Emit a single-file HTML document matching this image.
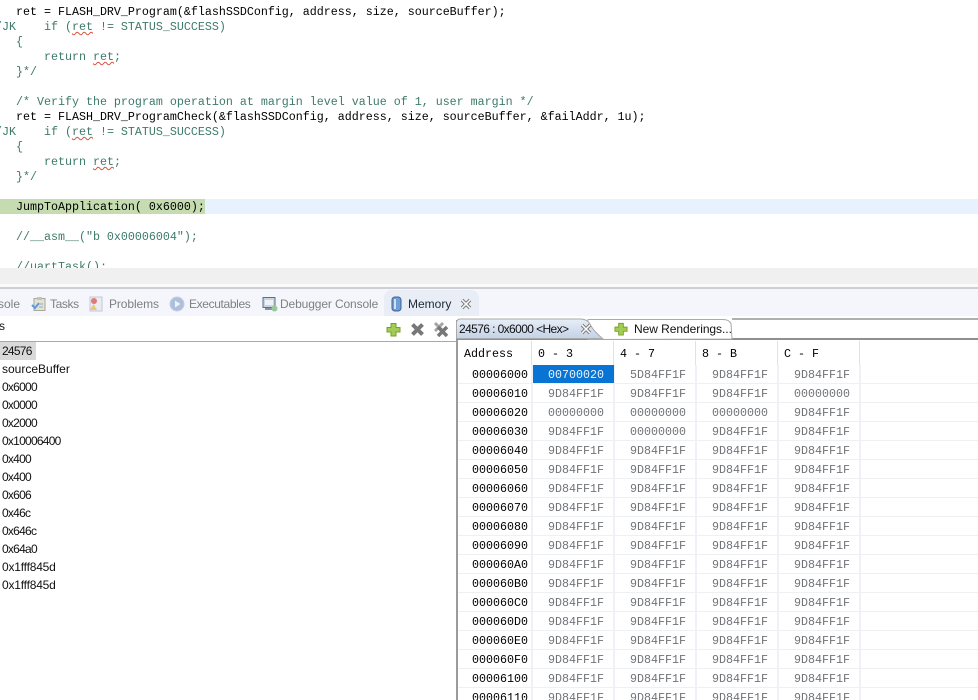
<!DOCTYPE html>
<html>
<head>
<meta charset="utf-8">
<style>
html,body{margin:0;padding:0;background:#fff;width:978px;height:700px;overflow:hidden;}
#root{position:relative;width:978px;height:700px;overflow:hidden;background:#fff;}
.a{position:absolute;}
#ed{left:0;top:0;width:978px;height:268px;overflow:hidden;background:#fff;}
.c{position:absolute;left:16px;white-space:pre;font:11.67px/15px "Liberation Mono",monospace;color:#3d7a6a;}
.k{color:#000;}
.w{text-decoration:underline wavy #d8503c 1px;text-underline-offset:1px;}
.t{position:absolute;top:297px;font:12px/14px "Liberation Sans",sans-serif;color:#7d8084;white-space:nowrap;}
.l{position:absolute;left:2px;font:12px/18px "Liberation Sans",sans-serif;color:#111;white-space:nowrap;}
.n{letter-spacing:-.75px;}
.r{position:absolute;left:458px;width:520px;height:19px;font:11.67px/21px "Liberation Mono",monospace;white-space:pre;border-bottom:1px solid #eff0f2;box-sizing:border-box;}
.r span{position:absolute;top:0;}
.r .ad{left:14px;color:#000;}
.r .d1{left:90px;color:#707377;}
.r .d2{left:172px;color:#707377;}
.r .d3{left:254px;color:#707377;}
.r .d4{left:336px;color:#707377;}
.v{position:absolute;top:365px;width:2px;height:335px;background:#eff1f7;}
.h{position:absolute;top:341px;width:1px;height:24px;background:#e2e2e2;}
.hd{position:absolute;top:347px;font:11.67px/15px "Liberation Mono",monospace;color:#000;white-space:pre;}
</style>
</head>
<body>
<div id="root">
<div class="a" id="ed">
<div class="c k" style="top:5px">ret = FLASH_DRV_Program(&amp;flashSSDConfig, address, size, sourceBuffer);</div>
<div class="c" style="top:20px;left:-5px">/JK    if (<span class="w">ret</span> != STATUS_SUCCESS)</div>
<div class="c" style="top:35px">{</div>
<div class="c" style="top:50px">    return <span class="w">ret</span>;</div>
<div class="c" style="top:65px">}*/</div>
<div class="c" style="top:95px">/* Verify the program operation at margin level value of 1, user margin */</div>
<div class="c k" style="top:110px">ret = FLASH_DRV_ProgramCheck(&amp;flashSSDConfig, address, size, sourceBuffer, &amp;failAddr, 1u);</div>
<div class="c" style="top:125px;left:-5px">/JK    if (<span class="w">ret</span> != STATUS_SUCCESS)</div>
<div class="c" style="top:140px">{</div>
<div class="c" style="top:155px">    return <span class="w">ret</span>;</div>
<div class="c" style="top:170px">}*/</div>
<div class="a" style="left:0;top:199px;width:978px;height:15px;background:#e8f2fe"></div>
<div class="a" style="left:0;top:199px;width:205px;height:15px;background:#c5dbb0"></div>
<div class="c k" style="top:200px">JumpToApplication( 0x6000);</div>
<div class="c" style="top:230px">//__asm__("b 0x00006004");</div>
<div class="c" style="top:260px">//uartTask();</div>
</div>

<div class="a" style="left:0;top:268px;width:978px;height:16px;background:#f0f0f0"></div>
<div class="a" style="left:0;top:284px;width:978px;height:3px;background:#fafafa"></div>
<div class="a" style="left:0;top:287px;width:978px;height:2px;background:#cdced6"></div>
<div class="a" style="left:0;top:289px;width:978px;height:27px;background:#f5f6fb"></div>
<div class="a" style="left:384px;top:290px;width:95px;height:26px;background:#e9edf5;border-radius:8px 8px 0 0"></div>

<div class="t" style="left:-2px">sole</div>
<svg class="a" style="left:31px;top:296px" width="16" height="16" viewBox="0 0 16 16"><rect x="3" y="2.500" width="11" height="12" fill="#e4e1d6" stroke="#a8a79c"/><rect x="6" y="1" width="5" height="3" fill="#c4c3b8"/><path d="M1 9l3 3 4-5" stroke="#5a9bdc" stroke-width="2" fill="none"/><path d="M8 8h4M8 11h4" stroke="#9ab" stroke-width="1"/></svg>
<div class="t" style="left:50px;letter-spacing:-.4px">Tasks</div>
<svg class="a" style="left:88px;top:296px" width="16" height="16" viewBox="0 0 16 16"><rect x="2" y="1" width="12" height="14" fill="#eceaf2" stroke="#c6c6d4"/><circle cx="6" cy="5" r="3" fill="#dd7a7a"/><path d="M5.500 8l3.500 6H2z" fill="#e8c877"/></svg>
<div class="t" style="left:109px;letter-spacing:-.1px">Problems</div>
<svg class="a" style="left:169px;top:296px" width="16" height="16" viewBox="0 0 16 16"><circle cx="8" cy="8" r="7" fill="#aebfdc" stroke="#c3cfe4"/><path d="M6 4.500l5.500 3.500L6 11.500z" fill="#eef2f8"/></svg>
<div class="t" style="left:189px;letter-spacing:-.36px">Executables</div>
<svg class="a" style="left:262px;top:296px" width="16" height="16" viewBox="0 0 16 16"><rect x="1" y="1.500" width="12" height="10" fill="#c8d4e2" stroke="#5c6f86"/><rect x="3" y="4" width="8" height="5" fill="#eef2f6"/><rect x="3" y="12" width="8" height="2" fill="#8894a4"/><circle cx="12.500" cy="12.500" r="3" fill="#9ac79a"/></svg>
<div class="t" style="left:280px;letter-spacing:-.12px">Debugger Console</div>
<svg class="a" style="left:391px;top:296px" width="11" height="16" viewBox="0 0 11 16"><rect x="1" y="1" width="9" height="14" rx="3" fill="#6f9fd8" stroke="#41628e"/><rect x="3" y="3" width="2" height="10" fill="#cfe0f4"/></svg>
<div class="t" style="left:408px;color:#1d2a3a">Memory</div>
<svg class="a" style="left:460px;top:298px" width="12" height="12" viewBox="0 0 12 12"><path d="M2 2l8 8M10 2l-8 8" stroke="#7b7b7b" stroke-width="3.500" fill="none"/><path d="M2 2l8 8M10 2l-8 8" stroke="#fff" stroke-width="1.500" fill="none"/></svg>

<div class="l" style="left:-1px;top:317px">s</div>

<svg class="a" style="left:386px;top:322px" width="15" height="15" viewBox="0 0 15 15"><path d="M5 1.500h5v4h4v4.500h-4v4h-5v-4h-4v-4.500h4z" fill="#a3cc52" stroke="#74a02f"/></svg>
<svg class="a" style="left:410px;top:322px" width="15" height="15" viewBox="0 0 15 15"><path d="M2.500 2.500l10 10M12.500 2.500l-10 10" stroke="#777" stroke-width="4" fill="none"/></svg>
<svg class="a" style="left:433px;top:321px" width="16" height="16" viewBox="0 0 16 16"><path d="M2 2l8 8M10 2l-8 8" stroke="#a5a5a5" stroke-width="3" fill="none"/><path d="M5 6l9 9M14 6l-9 9" stroke="#777" stroke-width="3.500" fill="none"/></svg>

<!-- left list -->
<div class="a" style="left:0;top:341px;width:456px;height:1px;background:#a8a8a8"></div>
<div class="a" style="left:0;top:342px;width:36px;height:18px;background:#d9d9d9"></div>
<div class="l n" style="top:342px">24576</div>
<div class="l" style="top:360px">sourceBuffer</div>
<div class="l n" style="top:378px">0x6000</div>
<div class="l n" style="top:396px">0x0000</div>
<div class="l n" style="top:414px">0x2000</div>
<div class="l n" style="top:432px">0x10006400</div>
<div class="l n" style="top:450px">0x400</div>
<div class="l n" style="top:468px">0x400</div>
<div class="l n" style="top:486px">0x606</div>
<div class="l n" style="top:504px">0x46c</div>
<div class="l n" style="top:522px">0x646c</div>
<div class="l n" style="top:540px">0x64a0</div>
<div class="l" style="top:558px;letter-spacing:-.2px">0x1fff845d</div>
<div class="l" style="top:576px;letter-spacing:-.2px">0x1fff845d</div>

<!-- right panel -->
<div class="a" style="left:456px;top:320px;width:2px;height:380px;background:#9b9b9b"></div>
<div class="a" style="left:732px;top:318px;width:246px;height:2px;background:#b0b0b0"></div>
<div class="a" style="left:456px;top:338px;width:522px;height:2px;background:#8f8f8f"></div>
<svg class="a" style="left:456px;top:317px" width="280" height="23" viewBox="0 0 280 23">
<defs><linearGradient id="g" x1="0" y1="0" x2="0" y2="1"><stop offset="0" stop-color="#e8eef7"/><stop offset="1" stop-color="#c2d2e7"/></linearGradient></defs>
<path d="M132 22.500V2.500h135q6 0 8 4l1 15.500z" fill="#fff" stroke="#a9a9a9"/>
<path d="M0.500 21.500V6q0-4 4-4h120q7 0 10 6t12 13.500z" fill="url(#g)" stroke="#a9a9a9"/>
</svg>
<div class="a" style="left:459px;top:322px;font:12px/14px 'Liberation Sans',sans-serif;color:#111;white-space:nowrap;letter-spacing:-.6px">24576 : 0x6000 &lt;Hex&gt;</div>
<svg class="a" style="left:580px;top:323px" width="12" height="12" viewBox="0 0 12 12"><path d="M2 2l8 8M10 2l-8 8" stroke="#7b7b7b" stroke-width="3.500" fill="none"/><path d="M2 2l8 8M10 2l-8 8" stroke="#fff" stroke-width="1.500" fill="none"/></svg>
<svg class="a" style="left:614px;top:322px" width="14" height="14" viewBox="0 0 15 15"><path d="M5 1.500h5v4h4v4.500h-4v4h-5v-4h-4v-4.500h4z" fill="#a3cc52" stroke="#74a02f"/></svg>
<div class="a" style="left:634px;top:322px;font:12px/14px 'Liberation Sans',sans-serif;color:#111;white-space:nowrap;letter-spacing:-.05px">New Renderings...</div>

<div class="hd" style="left:464px">Address</div>
<div class="hd" style="left:538px">0 - 3</div>
<div class="hd" style="left:620px">4 - 7</div>
<div class="hd" style="left:702px">8 - B</div>
<div class="hd" style="left:784px">C - F</div>
<div class="h" style="left:531px"></div>
<div class="h" style="left:613px"></div>
<div class="h" style="left:695px"></div>
<div class="h" style="left:777px"></div>
<div class="h" style="left:859px"></div>

<div class="r" style="top:365px"><span class="ad">00006000</span><span class="d2">5D84FF1F</span><span class="d3">9D84FF1F</span><span class="d4">9D84FF1F</span></div>
<div class="r" style="top:384px"><span class="ad">00006010</span><span class="d1">9D84FF1F</span><span class="d2">9D84FF1F</span><span class="d3">9D84FF1F</span><span class="d4">00000000</span></div>
<div class="r" style="top:403px"><span class="ad">00006020</span><span class="d1">00000000</span><span class="d2">00000000</span><span class="d3">00000000</span><span class="d4">9D84FF1F</span></div>
<div class="r" style="top:422px"><span class="ad">00006030</span><span class="d1">9D84FF1F</span><span class="d2">00000000</span><span class="d3">9D84FF1F</span><span class="d4">9D84FF1F</span></div>
<div class="r" style="top:441px"><span class="ad">00006040</span><span class="d1">9D84FF1F</span><span class="d2">9D84FF1F</span><span class="d3">9D84FF1F</span><span class="d4">9D84FF1F</span></div>
<div class="r" style="top:460px"><span class="ad">00006050</span><span class="d1">9D84FF1F</span><span class="d2">9D84FF1F</span><span class="d3">9D84FF1F</span><span class="d4">9D84FF1F</span></div>
<div class="r" style="top:479px"><span class="ad">00006060</span><span class="d1">9D84FF1F</span><span class="d2">9D84FF1F</span><span class="d3">9D84FF1F</span><span class="d4">9D84FF1F</span></div>
<div class="r" style="top:498px"><span class="ad">00006070</span><span class="d1">9D84FF1F</span><span class="d2">9D84FF1F</span><span class="d3">9D84FF1F</span><span class="d4">9D84FF1F</span></div>
<div class="r" style="top:517px"><span class="ad">00006080</span><span class="d1">9D84FF1F</span><span class="d2">9D84FF1F</span><span class="d3">9D84FF1F</span><span class="d4">9D84FF1F</span></div>
<div class="r" style="top:536px"><span class="ad">00006090</span><span class="d1">9D84FF1F</span><span class="d2">9D84FF1F</span><span class="d3">9D84FF1F</span><span class="d4">9D84FF1F</span></div>
<div class="r" style="top:555px"><span class="ad">000060A0</span><span class="d1">9D84FF1F</span><span class="d2">9D84FF1F</span><span class="d3">9D84FF1F</span><span class="d4">9D84FF1F</span></div>
<div class="r" style="top:574px"><span class="ad">000060B0</span><span class="d1">9D84FF1F</span><span class="d2">9D84FF1F</span><span class="d3">9D84FF1F</span><span class="d4">9D84FF1F</span></div>
<div class="r" style="top:593px"><span class="ad">000060C0</span><span class="d1">9D84FF1F</span><span class="d2">9D84FF1F</span><span class="d3">9D84FF1F</span><span class="d4">9D84FF1F</span></div>
<div class="r" style="top:612px"><span class="ad">000060D0</span><span class="d1">9D84FF1F</span><span class="d2">9D84FF1F</span><span class="d3">9D84FF1F</span><span class="d4">9D84FF1F</span></div>
<div class="r" style="top:631px"><span class="ad">000060E0</span><span class="d1">9D84FF1F</span><span class="d2">9D84FF1F</span><span class="d3">9D84FF1F</span><span class="d4">9D84FF1F</span></div>
<div class="r" style="top:650px"><span class="ad">000060F0</span><span class="d1">9D84FF1F</span><span class="d2">9D84FF1F</span><span class="d3">9D84FF1F</span><span class="d4">9D84FF1F</span></div>
<div class="r" style="top:669px"><span class="ad">00006100</span><span class="d1">9D84FF1F</span><span class="d2">9D84FF1F</span><span class="d3">9D84FF1F</span><span class="d4">9D84FF1F</span></div>
<div class="r" style="top:688px"><span class="ad">00006110</span><span class="d1">9D84FF1F</span><span class="d2">9D84FF1F</span><span class="d3">9D84FF1F</span><span class="d4">9D84FF1F</span></div>

<div class="v" style="left:531px"></div>
<div class="v" style="left:613px"></div>
<div class="v" style="left:695px"></div>
<div class="v" style="left:777px"></div>
<div class="v" style="left:859px"></div>

<div class="a" style="left:533px;top:365px;width:81px;height:18px;background:#0a74d4"></div>
<div class="a" style="left:548px;top:365px;font:11.67px/21px 'Liberation Mono',monospace;color:#eaf3fc;white-space:pre">00700020</div>
</div>
</body>
</html>
